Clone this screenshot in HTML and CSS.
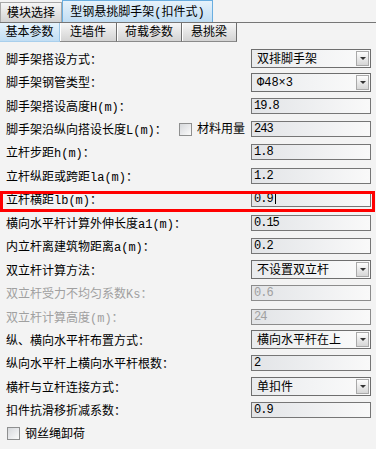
FILE: index.html
```html
<!DOCTYPE html>
<html lang="zh-CN">
<head>
    <meta charset="UTF-8">
    <title>型钢悬挑脚手架(扣件式) - 基本参数</title>
    <link rel="stylesheet" href="styles.css">
</head>
<body>
    <div class="tabs tabs-top">
        <div class="tab">模块选择</div>
        <div class="tab active">型钢悬挑脚手架(扣件式)</div>
    </div>
    <div class="tabs tabs-sub">
        <div class="tab active">基本参数</div>
        <div class="tab">连墙件</div>
        <div class="tab">荷载参数</div>
        <div class="tab">悬挑梁</div>
    </div>

    <div class="form">
        <div class="row">
            <label>脚手架搭设方式：</label>
            <div class="select"><span>双排脚手架</span><span class="drop"></span></div>
        </div>
        <div class="row">
            <label>脚手架钢管类型：</label>
            <div class="select"><span>Φ48×3</span><span class="drop"></span></div>
        </div>
        <div class="row">
            <label>脚手架搭设高度H(m)：</label>
            <div class="field">19.8</div>
        </div>
        <div class="row">
            <label>脚手架沿纵向搭设长度L(m)：</label>
            <div class="extra"><span class="check"></span><span>材料用量</span></div>
            <div class="field">243</div>
        </div>
        <div class="row">
            <label>立杆步距h(m)：</label>
            <div class="field">1.8</div>
        </div>
        <div class="row">
            <label>立杆纵距或跨距la(m)：</label>
            <div class="field">1.2</div>
        </div>
        <div class="row marked">
            <label>立杆横距lb(m)：</label>
            <div class="field">0.9<span class="caret"></span></div>
        </div>
        <div class="row">
            <label>横向水平杆计算外伸长度a1(m)：</label>
            <div class="field">0.15</div>
        </div>
        <div class="row">
            <label>内立杆离建筑物距离a(m)：</label>
            <div class="field">0.2</div>
        </div>
        <div class="row">
            <label>双立杆计算方法：</label>
            <div class="select"><span>不设置双立杆</span><span class="drop"></span></div>
        </div>
        <div class="row disabled">
            <label>双立杆受力不均匀系数Ks：</label>
            <div class="field">0.6</div>
        </div>
        <div class="row disabled">
            <label>双立杆计算高度(m)：</label>
            <div class="field">24</div>
        </div>
        <div class="row">
            <label>纵、横向水平杆布置方式：</label>
            <div class="select"><span>横向水平杆在上</span><span class="drop"></span></div>
        </div>
        <div class="row">
            <label>纵向水平杆上横向水平杆根数：</label>
            <div class="field">2</div>
        </div>
        <div class="row">
            <label>横杆与立杆连接方式：</label>
            <div class="select"><span>单扣件</span><span class="drop"></span></div>
        </div>
        <div class="row">
            <label>扣件抗滑移折减系数：</label>
            <div class="field">0.9</div>
        </div>
        <div class="row">
            <div class="extra extra-left"><span class="check"></span><span>钢丝绳卸荷</span></div>
        </div>
    </div>
</body>
</html>
```

FILE: styles.css
```css
body {
    margin: 0;
    background: #f3f3f3;
    font-family: "Liberation Mono", "Noto Sans CJK SC", monospace;
    font-size: 12px;
    line-height: 16px;
    color: #000;
}

/* tab strips */
.tabs {
    display: flex;
    box-sizing: border-box;
}
.tabs-top {
    height: 23px;
    align-items: flex-end;
    border-bottom: 1px solid #767676;
}
.tabs-top .tab {
    height: 20px;
    border: 1px solid #a8a8a8;
    border-bottom: none;
}
.tabs-top .tab:first-child {
    width: 62px;
}
.tabs-top .tab.active {
    width: 151px;
    height: 22px;
    border-color: #6aaee0;
}
.tab {
    box-sizing: border-box;
    display: flex;
    align-items: center;
    justify-content: center;
    padding-top: 2px;
    background: linear-gradient(#f6f6f6, #d3d3d3);
    white-space: nowrap;
}
.tab.active {
    background: linear-gradient(#e6f2fb, #c0ddf3);
}
.tabs-sub {
    height: 19px;
}
.tabs-sub .tab {
    height: 19px;
    border-right: 1px solid #6e6e6e;
    border-bottom: 1px solid #8a8a8a;
    box-shadow: inset 1px 0 0 #fff;
}
.tabs-sub .tab:nth-child(1) { width: 60px; }
.tabs-sub .tab:nth-child(2) { width: 57px; }
.tabs-sub .tab:nth-child(3) { width: 65px; }
.tabs-sub .tab:nth-child(4) { width: 55px; }
.tabs-sub .tab.active {
    border-right-color: #9cc6e6;
    border-bottom-color: #a9cfec;
    box-shadow: none;
}

/* parameter rows */
.form {
    padding-top: 5px;
}
.row {
    position: relative;
    display: flex;
    align-items: center;
    height: 23.45px;
    padding: 0 5px 0 6px;
}
.row label {
    flex: 1;
    padding-top: 4px;
    white-space: nowrap;
}
.row.disabled label,
.row.disabled .field {
    color: #a0a0a0;
}
.row.disabled .field {
    border-color: #8c8c8c;
}
.row.marked::after {
    content: "";
    position: absolute;
    left: 0;
    right: 1px;
    top: 3px;
    bottom: -1px;
    border: 3px solid #ff0000;
}

.field {
    box-sizing: border-box;
    width: 120px;
    height: 16px;
    padding: 0 2px;
    border: 1px solid #767676;
    background: linear-gradient(to right, #e2e4e7, #f9f9f9);
    line-height: 15px;
    letter-spacing: -1px;
    white-space: nowrap;
}
.caret {
    display: inline-block;
    width: 1px;
    height: 12px;
    margin-left: 2px;
    vertical-align: -2px;
    background: #000;
}

.select {
    box-sizing: border-box;
    width: 120px;
    height: 19px;
    padding: 0 1px 0 5px;
    border: 1px solid #6e6e6e;
    background: linear-gradient(to right, #e9ebed, #fbfbfb);
    display: flex;
    align-items: center;
    justify-content: space-between;
    white-space: nowrap;
}
.select span:first-child,
.extra span:last-child {
    padding-top: 2px;
}
.drop {
    position: relative;
    box-sizing: border-box;
    width: 13px;
    height: 15px;
    border: 1px solid #a9a9a9;
    background: linear-gradient(#fdfdfd, #d6d6d6);
}
.drop::after {
    content: "";
    position: absolute;
    left: 3px;
    top: 5px;
    border-left: 3px solid transparent;
    border-right: 3px solid transparent;
    border-top: 3px solid #333;
}

.extra {
    display: flex;
    align-items: center;
    gap: 5px;
    margin-right: 6px;
    white-space: nowrap;
}
.extra-left {
    margin-left: 1px;
}
.check {
    box-sizing: border-box;
    width: 13px;
    height: 13px;
    border: 1px solid #8e8f8f;
    background: linear-gradient(135deg, #d6d8db, #fbfbfb);
}
```
